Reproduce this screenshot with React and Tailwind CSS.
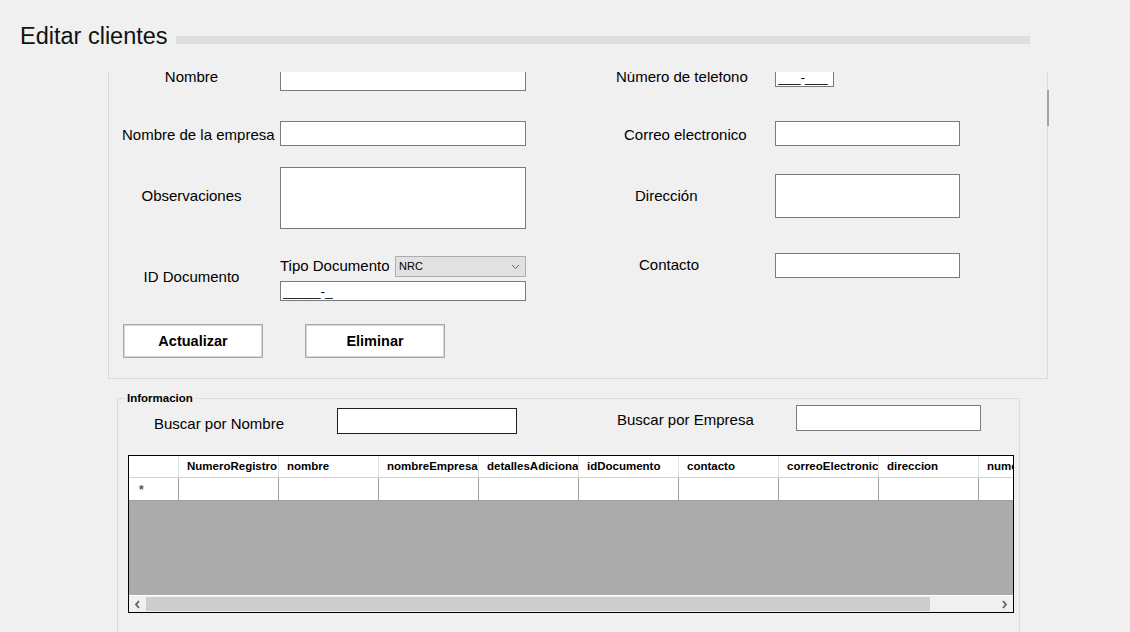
const columnas = [
  "NumeroRegistro",
  "nombre",
  "nombreEmpresa",
  "detallesAdicionales",
  "idDocumento",
  "contacto",
  "correoElectronico",
  "direccion",
  "numeroTelefono",
];

function Campo({ className = "", value }) {
  return (
    <input
      readOnly
      value={value ?? ""}
      className={`shrink-0 border border-[#7a7a7a] bg-white px-[2px] text-[13.5px] leading-none text-black outline-none ${className}`}
    />
  );
}

function Boton({ children }) {
  return (
    <button className="h-[34px] w-[140px] border border-[#a9a9a9] bg-white pt-px text-[14.5px] font-bold shadow-[inset_0_0_0_1px_#d6d6d6]">
      {children}
    </button>
  );
}

function Chevron({ dir }) {
  return (
    <svg width="7" height="9" viewBox="0 0 7 9" fill="none">
      <path
        d={dir === "left" ? "M5 1 L2 4.5 L5 8" : "M2 1 L5 4.5 L2 8"}
        stroke="#606060"
        strokeWidth="1.8"
      />
    </svg>
  );
}

export default function App() {
  return (
    <div className="h-[632px] w-[1130px] overflow-hidden bg-[#f0f0f0] font-['Liberation_Sans',Arial,sans-serif] text-black">
      {/* titulo */}
      <div className="mt-[22px] flex h-[28px] items-start pl-[20px]">
        <h1 className="text-[23.5px] leading-[28px] font-normal text-[#111]">Editar clientes</h1>
        <div className="ml-[8px] mt-[14px] h-[8px] w-[854px] bg-[#dedede]" />
      </div>

      {/* panel de edicion */}
      <div className="ml-[108px] mt-[22px] flex h-[307px] w-[940px] border-b border-l border-[#dadada]">
        <div className="flex-1 overflow-hidden">
          <div className="-mt-[6px] flex text-[15px] leading-[17px]">
            {/* columna izquierda */}
            <div className="flex w-[451px] flex-col">
              <div className="flex h-[25px] items-start">
                <span className="mt-[2px] w-[165px] text-center">Nombre</span>
                <Campo className="ml-[6px] h-[25px] w-[246px]" />
              </div>
              <div className="mt-[30px] flex h-[25px] items-start">
                <span className="mt-[5px] w-[165px] whitespace-nowrap pl-[13px]">Nombre de la empresa</span>
                <Campo className="ml-[6px] h-[25px] w-[246px]" />
              </div>
              <div className="mt-[21px] flex h-[62px] items-start">
                <span className="mt-[20px] w-[165px] text-center">Observaciones</span>
                <textarea
                  readOnly
                  className="ml-[6px] h-[62px] w-[246px] resize-none border border-[#7a7a7a] bg-white outline-none"
                />
              </div>
              <div className="mt-[27px] flex items-start">
                <span className="mt-[12px] w-[165px] text-center">ID Documento</span>
                <div className="ml-[6px] flex w-[246px] flex-col">
                  <div className="flex h-[21px] items-start">
                    <span className="mt-[1px] w-[115px] whitespace-nowrap">Tipo Documento</span>
                    <div className="flex h-[21px] w-[131px] items-center justify-between border border-[#adadad] bg-[#e1e1e1] pl-[3px] pr-[5px]">
                      <span className="text-[11px] leading-none">NRC</span>
                      <svg width="9" height="6" viewBox="0 0 9 6" fill="none">
                        <path d="M1 1 L4.5 4.5 L8 1" stroke="#606060" strokeWidth="1" />
                      </svg>
                    </div>
                  </div>
                  <Campo className="mt-[4px] h-[20px] w-[246px]" value="_____-_" />
                </div>
              </div>
              <div className="mt-[23px] flex">
                <div className="ml-[14px]">
                  <Boton>Actualizar</Boton>
                </div>
                <div className="ml-[42px]">
                  <Boton>Eliminar</Boton>
                </div>
              </div>
            </div>

            {/* columna derecha */}
            <div className="flex flex-1 flex-col">
              <div className="mt-[1px] flex items-start">
                <span className="mt-[1px] w-[215px] whitespace-nowrap pl-[56px]">Número de telefono</span>
                <Campo className="h-[20px] w-[59px]" value="___-___" />
              </div>
              <div className="mt-[34px] flex items-start">
                <span className="mt-[5px] w-[215px] whitespace-nowrap pl-[64px]">Correo electronico</span>
                <Campo className="h-[25px] w-[185px]" />
              </div>
              <div className="mt-[28px] flex items-start">
                <span className="mt-[13px] w-[215px] pl-[75px]">Dirección</span>
                <textarea
                  readOnly
                  className="h-[44px] w-[185px] resize-none border border-[#7a7a7a] bg-white outline-none"
                />
              </div>
              <div className="mt-[35px] flex items-start">
                <span className="mt-[3px] w-[215px] pl-[79px]">Contacto</span>
                <Campo className="h-[25px] w-[185px]" />
              </div>
            </div>
          </div>
        </div>
        {/* barra de desplazamiento */}
        <div className="w-px bg-[#dadada]">
          <div className="mt-[18px] h-[36px] w-[2px] bg-[#a3a3a3]" />
        </div>
      </div>

      {/* grupo informacion */}
      <fieldset className="ml-[117px] mt-[13px] h-[260px] w-[903px] border border-[#dcdcdc]">
        <legend className="ml-[7px] px-[2px] text-[11.5px] font-bold leading-[13px]">Informacion</legend>

        <div className="flex h-[29px] items-start text-[15px] leading-[17px]">
          <span className="mt-[10px] w-[219px] whitespace-nowrap pl-[36px]">Buscar por Nombre</span>
          <input readOnly className="mt-[3px] h-[26px] w-[180px] border border-[#1e1e1e] bg-white outline-none" />
          <span className="mt-[6px] w-[279px] whitespace-nowrap pl-[100px]">Buscar por Empresa</span>
          <input readOnly className="h-[26px] w-[185px] border border-[#7a7a7a] bg-white outline-none" />
        </div>

        <div className="ml-[10px] mt-[21px] flex w-[886px] flex-col border border-black">
          <div className="flex h-[22px] overflow-hidden border-b border-[#d2d2d2] bg-white">
            <div className="w-[50px] shrink-0 border-r border-[#e2e2e2]" />
            {columnas.map((c) => (
              <div
                key={c}
                className="w-[100px] shrink-0 overflow-hidden whitespace-nowrap border-r border-[#e2e2e2] pl-[8px] text-[11.5px] font-bold leading-[20px]"
              >
                {c}
              </div>
            ))}
          </div>
          <div className="flex h-[23px] overflow-hidden border-b border-[#a0a0a0] bg-white">
            <div className="w-[50px] shrink-0 border-r border-[#a0a0a0] pl-[10px] text-[12px] font-bold leading-[25px] text-[#555]">
              *
            </div>
            {columnas.map((c) => (
              <div key={c} className="w-[100px] shrink-0 border-r border-[#a0a0a0]" />
            ))}
          </div>
          <div className="h-[94px] bg-[#ababab]" />
          <div className="h-px bg-white" />
          <div className="flex h-[16px] bg-[#f0f0f0]">
            <div className="flex w-[17px] items-center justify-center">
              <Chevron dir="left" />
            </div>
            <div className="my-px w-[784px] bg-[#cdcdcd]" />
            <div className="flex-1" />
            <div className="flex w-[17px] items-center justify-center">
              <Chevron dir="right" />
            </div>
          </div>
        </div>
      </fieldset>
    </div>
  );
}
